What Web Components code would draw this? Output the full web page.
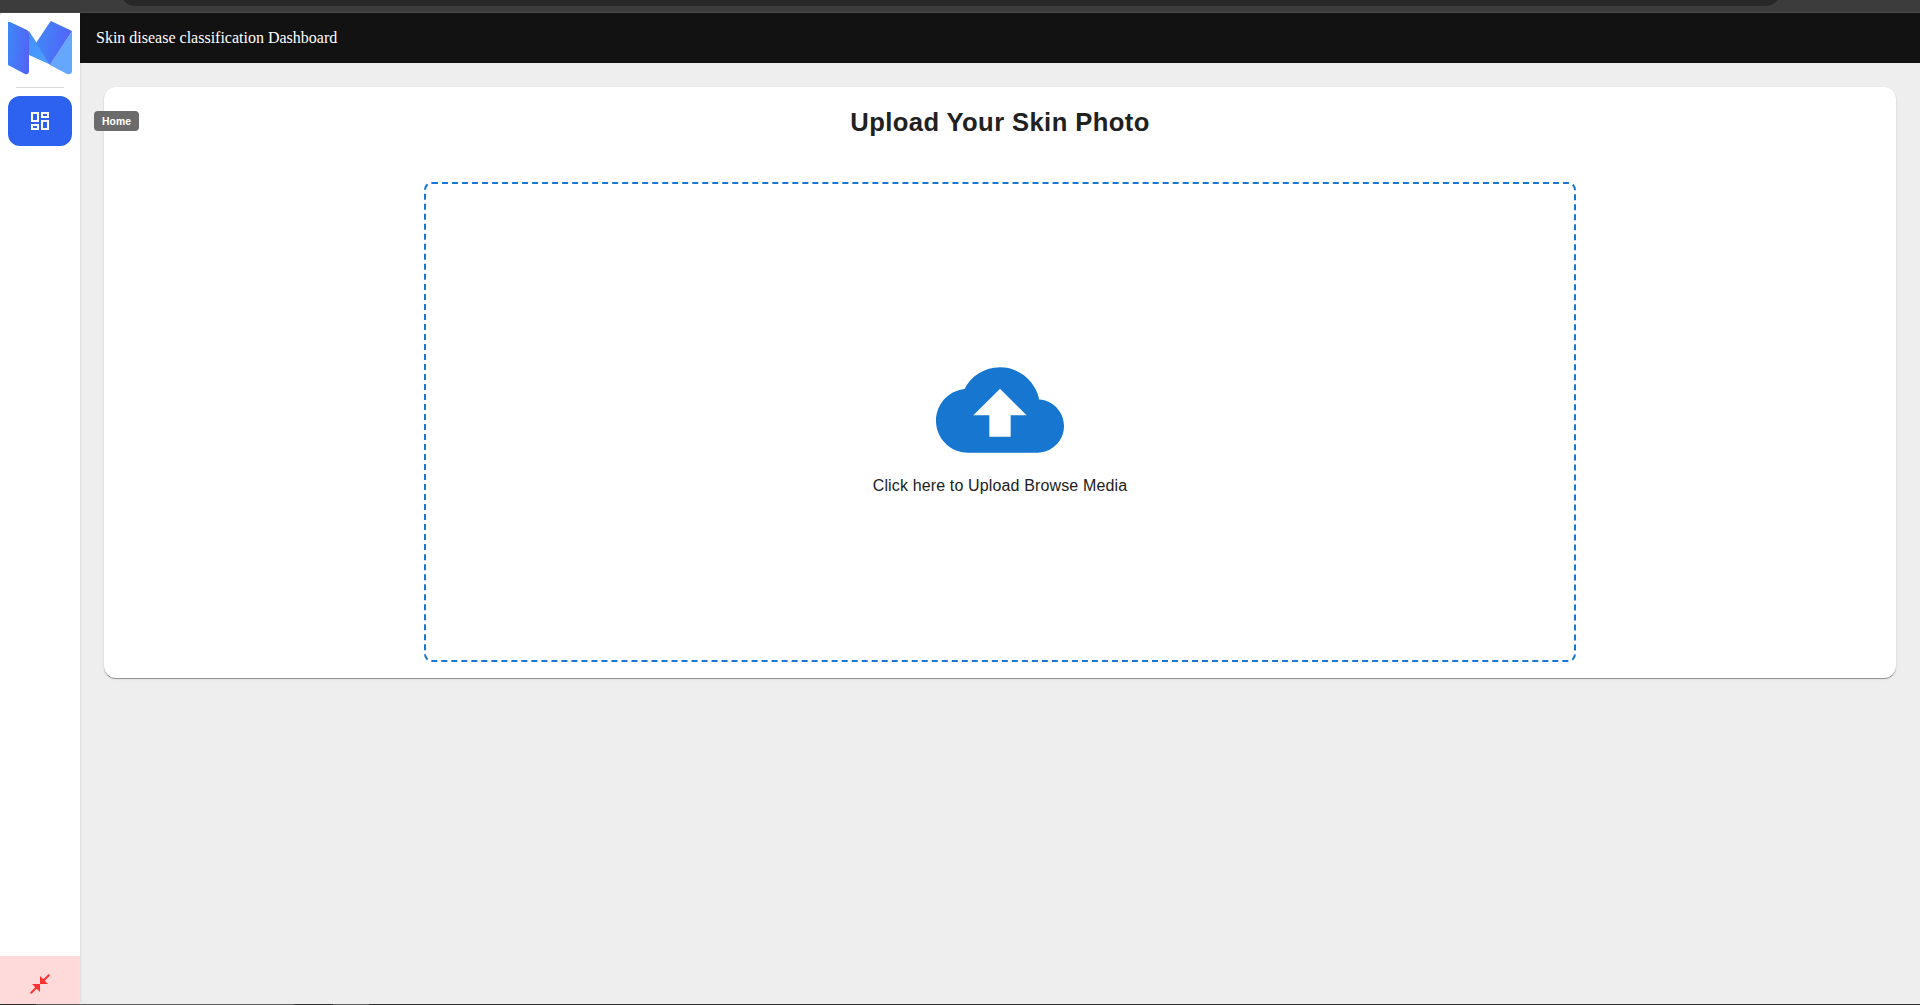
<!DOCTYPE html>
<html lang="en">
<head>
<meta charset="utf-8">
<title>Skin disease classification Dashboard</title>
<style>
html,body{margin:0;height:100%;overflow:hidden;background:#eee}
body{font-family:"Liberation Sans",Arial,sans-serif;color:#212121}
</style>
</head>
<body>
<app-shell>
  <browser-edge slot="top"></browser-edge>
  <side-bar slot="side">
    <brand-logo slot="brand"></brand-logo>
    <nav-item label="Home"></nav-item>
    <collapse-button slot="footer"></collapse-button>
  </side-bar>
  <top-bar slot="header">Skin disease classification Dashboard</top-bar>
  <upload-card>
    <span slot="title">Upload Your Skin Photo</span>
    <drop-zone>Click here to Upload Browse Media</drop-zone>
  </upload-card>
  <task-edge slot="bottom"></task-edge>
</app-shell>
<script>
const define = (name, html) => customElements.define(name, class extends HTMLElement {
  constructor() {
    super();
    const t = document.createElement('template');
    t.innerHTML = html;
    this.attachShadow({mode: 'open'}).append(t.content.cloneNode(true));
  }
  connectedCallback() {
    const l = this.shadowRoot.querySelector('.label');
    if (l) l.textContent = this.getAttribute('label');
  }
});

define('app-shell', `<style>
:host{display:grid;grid-template:13px 50px 1fr 1px / 80px 1fr;height:1005px;background:#eee}
slot[name=top]::slotted(*),slot[name=bottom]::slotted(*){grid-column:1/3}
slot[name=side]::slotted(*){grid-row:2/4;grid-column:1}
main{padding:24px}
</style><slot name="top"></slot><slot name="side"></slot><slot name="header"></slot><main><slot></slot></main><slot name="bottom"></slot>`);

define('browser-edge', `<style>
:host{display:block;box-sizing:border-box;height:13px;background:#3c3c3c;border-bottom:1px solid #4a4a4a;padding:0 138px 0 119px;overflow:hidden}
div{height:34px;margin-top:-28px;border-radius:17px;background:#282828}
</style><div></div>`);

define('task-edge', `<style>
:host{display:block;background:linear-gradient(90deg,#2f2f2f 36px,#606060 36px 294px,#2f2f2f 294px 333px,#606060 333px 369px,#2f2f2f 369px)}
</style>`);

define('side-bar', `<style>
:host{display:flex;flex-direction:column;background:#fff;box-shadow:0 0 2px rgba(0,0,0,.22);z-index:1;position:relative;border-radius:4px 0 4px 4px}
hr{width:48px;height:1px;margin:0 auto;border:0;background:#dadada}
nav{padding:8px;flex:1}
</style><slot name="brand"></slot><hr><nav><slot></slot></nav><slot name="footer"></slot>`);

define('brand-logo', `<style>
:host{display:block;height:54px;padding:8px 8px 12px}
svg{display:block}
</style><svg width="64" height="54" viewBox="0 0 64 54">
<defs>
<linearGradient id="a" x1="0" y1=".4" x2="1" y2=".6"><stop stop-color="#3e86f6"/><stop offset="1" stop-color="#5363f8"/></linearGradient>
<linearGradient id="b" x1="0" y1=".3" x2="1" y2=".5"><stop stop-color="#418af8"/><stop offset=".5" stop-color="#4a74f8"/><stop offset="1" stop-color="#5163f8"/></linearGradient>
<linearGradient id="c" x1="0" y1="0" x2="1" y2="1"><stop stop-color="#428ffc"/><stop offset="1" stop-color="#4fa0fe"/></linearGradient>
</defs>
<path fill="url(#c)" d="M21 10 43 44 21 34z"/>
<path fill="#65a7fc" d="M64 10V51Q63 54 59 53L42 44z"/>
<path fill="url(#b)" d="M43 0 64 10 42 44 28 22 42 1z"/>
<path fill="url(#a)" d="M0 1H2L19 9Q21 10 21 12V51Q20 54 17 53L0 44z"/>
</svg>`);

define('nav-item', `<style>
:host{display:flex;height:50px;border-radius:12px;background:#2c62ef;align-items:center;justify-content:center;position:relative}
svg{fill:#fff}
.label{position:absolute;left:86px;top:15px;height:20px;width:45px;border-radius:4px;background:#6b6b6b;color:#fff;font:bold 10.4px/21px "Liberation Sans",Arial,sans-serif;text-align:center}
</style><svg width="24" height="24" viewBox="0 0 24 24"><path d="M19 5v2h-4V5h4M9 5v6H5V5h4m10 8v6h-4v-6h4M9 17v2H5v-2h4M21 3h-8v6h8V3zM11 3H3v10h8V3zm10 8h-8v10h8V11zm-10 4H3v6h8v-6z"/></svg><span class="label"></span>`);

define('collapse-button', `<style>
:host{display:flex;box-sizing:border-box;height:48px;padding-top:16px;justify-content:center;background:#ffdada;border-radius:0 0 4px 4px}
svg{fill:#fb3232}
</style><svg width="24" height="24" viewBox="0 0 24 24"><path d="M22 3.41 16.71 8.7 20 12h-8V4l3.29 3.29L20.59 2 22 3.41zM3.41 22l5.29-5.29L12 20v-8H4l3.29 3.29L2 20.59 3.41 22z"/></svg>`);

define('top-bar', `<style>
:host{display:flex;align-items:center;padding:0 16px;background:#121212;color:#fff;font:16px/20px "Liberation Serif","Times New Roman",serif}
</style><span><slot></slot></span>`);

define('upload-card', `<style>
:host{display:flex;flex-direction:column;align-items:center;box-sizing:border-box;height:591px;padding:16px;background:#fff;border-radius:12px;box-shadow:0 1px 0 rgba(0,0,0,.28),0 1px 2px rgba(0,0,0,.18)}
h1{margin:0 0 40px;font-size:25.6px;line-height:39px;font-weight:700;letter-spacing:.4px}
</style><h1><slot name="title"></slot></h1><slot></slot>`);

define('drop-zone', `<style>
:host{display:flex;flex-direction:column;align-items:center;justify-content:center;box-sizing:border-box;width:1152px;height:480px;border:2px dashed #1976d2;border-radius:8px;font-size:16px;line-height:24px;letter-spacing:.14px}
svg{fill:#1676d0;display:block}
</style><svg width="128" height="128" viewBox="0 0 24 24"><path d="M19.35 10.04C18.67 6.59 15.64 4 12 4 9.11 4 6.6 5.64 5.35 8.04 2.34 8.36 0 10.91 0 14c0 3.31 2.69 6 6 6h13c2.76 0 5-2.24 5-5 0-2.64-2.05-4.78-4.65-4.96zM14 13v4h-4v-4H7l5-5 5 5h-3z"/></svg><span><slot></slot></span>`);
</script>
</body>
</html>
